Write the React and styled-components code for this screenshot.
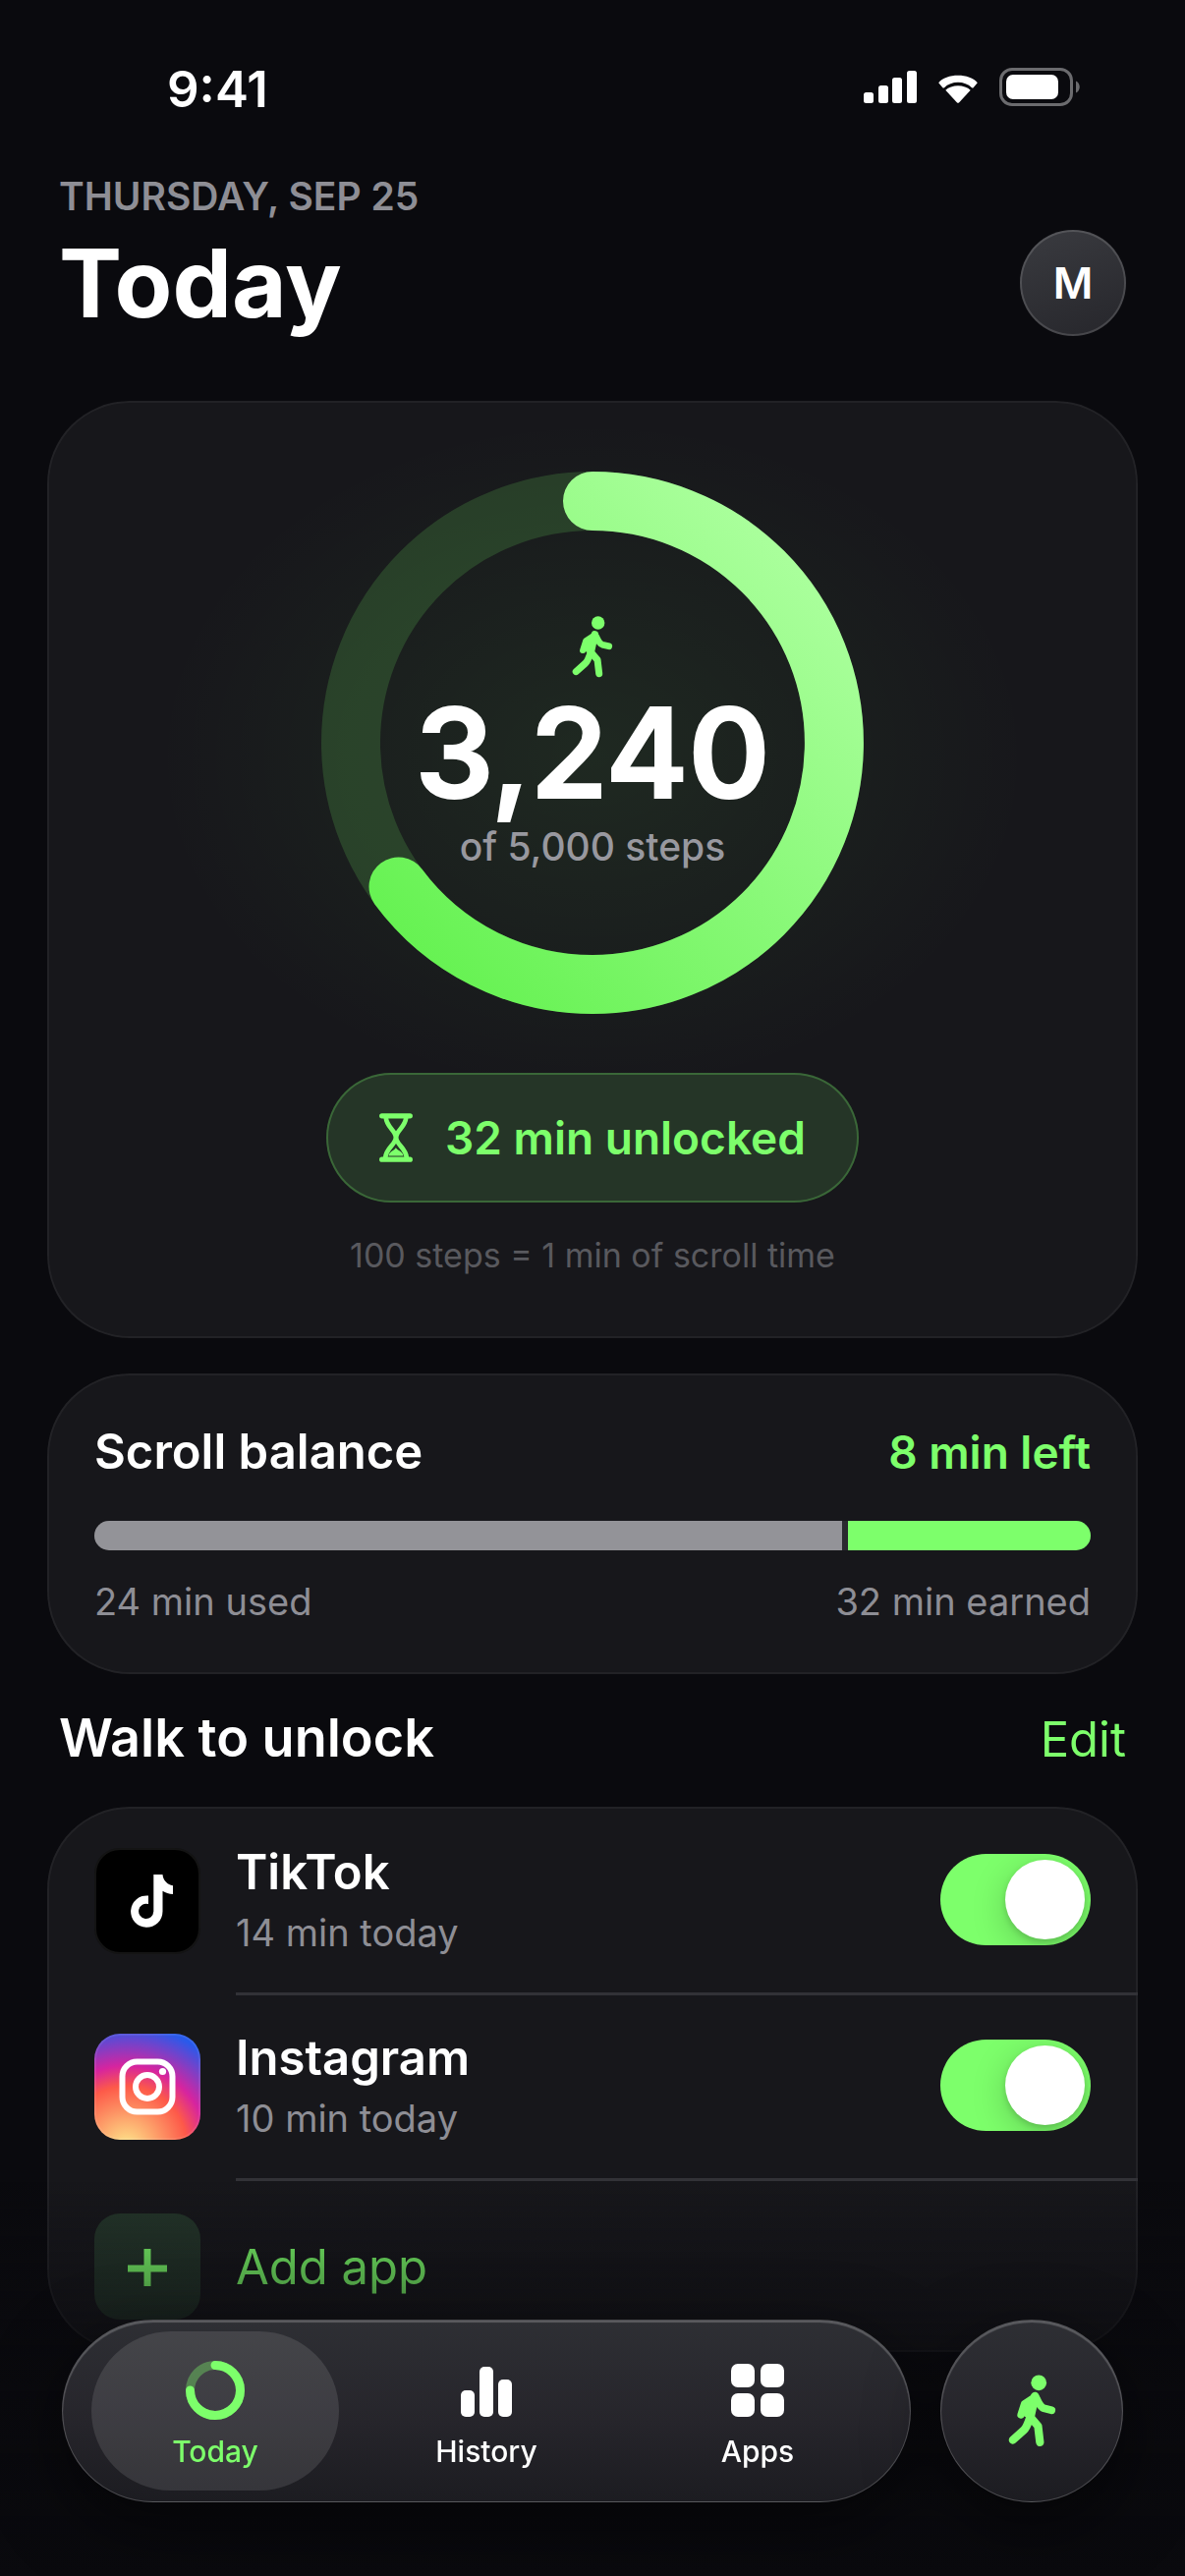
import React, { useState } from 'react';
import styled, { createGlobalStyle } from 'styled-components';

const accent = '#7dff6b';
const page = '#0a0a0e';

const GlobalStyle = createGlobalStyle`
    * {
        box-sizing: border-box;
    }
    body {
        margin: 0;
        background: ${page};
        color: #fff;
        font-family: Inter, "Liberation Sans", sans-serif;
    }
    h1, h2, h3, p, ul {
        margin: 0;
        padding: 0;
    }
    button {
        border: 0;
        padding: 0;
        background: none;
        color: inherit;
        font: inherit;
        cursor: pointer;
    }
    svg {
        display: block;
    }
`;

const Screen = styled.div`
    min-height: 100vh;
    padding-bottom: 226px;
    background: ${page};
`;

const StatusBar = styled.div`
    height: 180px;
    padding: 0 106px 0 170px;
    display: flex;
    align-items: center;
    justify-content: space-between;
`;

const Time = styled.span`
    font-size: 51px;
    font-weight: 600;
`;

const Header = styled.header`
    padding: 0 60px 66px;
    display: flex;
    align-items: flex-end;
    justify-content: space-between;
`;

const HeaderText = styled.div`
    display: flex;
    flex-direction: column;
    gap: 14px;
`;

const DateLabel = styled.p`
    font-size: 39px;
    font-weight: 600;
    line-height: 40px;
    color: #8e8e95;
    text-transform: uppercase;
`;

const Title = styled.h1`
    font-size: 96px;
    font-weight: 700;
    line-height: 108px;
`;

const Avatar = styled.button`
    width: 108px;
    height: 108px;
    border-radius: 50%;
    background: linear-gradient(160deg, #3a3b40, #26262b);
    box-shadow: inset 0 0 0 2px rgba(255, 255, 255, 0.14);
    font-size: 44px;
    font-weight: 600;
`;

const Card = styled.section`
    margin: 0 48px;
    border-radius: 84px;
    background: #17171b;
    box-shadow: inset 0 0 0 2px rgba(255, 255, 255, 0.05);
    overflow: hidden;
`;

const RingCard = styled(Card)`
    padding: 72px 48px 60px;
    display: flex;
    flex-direction: column;
    align-items: center;
    background:
        radial-gradient(ellipse 40% 36% at 50% 38%, rgba(125, 255, 107, 0.08), rgba(125, 255, 107, 0)),
        #17171b;
`;

const RingBox = styled.div`
    display: grid;
    place-items: center;

    > * {
        grid-area: 1 / 1;
    }
`;

const RingContent = styled.div`
    display: flex;
    flex-direction: column;
    align-items: center;
`;

const Steps = styled.strong`
    margin-top: 16px;
    font-size: 126px;
    font-weight: 600;
    line-height: 120px;
    -webkit-text-stroke: 2px #fff;
    stroke-linejoin: round;
`;

const StepsGoal = styled.span`
    margin-top: 12px;
    font-size: 39px;
    font-weight: 500;
    line-height: 48px;
    color: #98989f;
`;

const UnlockedPill = styled.div`
    height: 132px;
    margin-top: 60px;
    padding: 0 54px;
    display: flex;
    align-items: center;
    gap: 33px;
    border-radius: 66px;
    background: #253527;
    box-shadow: inset 0 0 0 2px rgba(125, 255, 107, 0.25);
    color: ${accent};
    font-size: 46px;
    font-weight: 600;
`;

const Hint = styled.p`
    margin-top: 30px;
    font-size: 34px;
    line-height: 48px;
    color: #59595e;
`;

const BalanceCard = styled(Card)`
    margin-top: 36px;
    padding: 50px 48px;
`;

const Split = styled.div`
    display: flex;
    align-items: baseline;
    justify-content: space-between;
`;

const RowTitle = styled.h3`
    font-size: 49px;
    font-weight: 600;
    line-height: 60px;
`;

const Left = styled.strong`
    font-size: 46px;
    font-weight: 600;
    line-height: 60px;
    color: ${accent};
`;

const Muted = styled.span`
    font-size: 38px;
    line-height: 48px;
    color: #8e8e95;
`;

const Track = styled.div`
    height: 30px;
    margin: 40px 0 28px;
    display: flex;
    gap: 6px;
    border-radius: 15px;
    background: #2a2a2f;
    overflow: hidden;
`;

const Used = styled.div`
    background: #939398;
`;

const Remaining = styled.div`
    flex: 1;
    background: ${accent};
`;

const SectionHead = styled(Split)`
    padding: 29px 60px 34px;
`;

const SectionTitle = styled.h2`
    font-size: 54px;
    font-weight: 600;
    line-height: 72px;
`;

const EditLink = styled.a`
    color: ${accent};
    font-size: 49px;
    text-decoration: none;
`;

const AppList = styled.ul`
    padding-top: 3px;
    list-style: none;
`;

const AppRow = styled.li`
    padding-left: 48px;
    display: flex;
    align-items: center;
    gap: 36px;
`;

const RowBody = styled.div`
    flex: 1;
    min-height: ${(p) => (p.$last ? 174 : 189)}px;
    padding: 0 48px ${(p) => (p.$last ? 0 : 4)}px 0;
    display: flex;
    align-items: center;
    justify-content: space-between;
    border-bottom: ${(p) => (p.$last ? 0 : 3)}px solid #323237;
`;

const RowLabel = styled.label`
    display: flex;
    flex-direction: column;
    gap: 7px;
`;

const AppIcon = styled.span`
    width: 108px;
    height: 108px;
    margin-bottom: ${(p) => (p.$flat ? 0 : 3)}px;
    display: grid;
    place-items: center;
    border-radius: 26px;
    background: ${(p) => p.$fill};
    box-shadow: ${(p) => (p.$flat ? 'none' : 'inset 0 0 0 2px rgba(255, 255, 255, 0.08)')};
`;

const AddButton = styled.button`
    color: ${accent};
    font-size: 49px;
`;

const Switch = styled.input`
    appearance: none;
    width: 153px;
    height: 93px;
    margin: 0;
    padding: 6px;
    display: flex;
    justify-content: ${(p) => (p.checked ? 'flex-end' : 'flex-start')};
    border-radius: 47px;
    background: ${(p) => (p.checked ? accent : '#39393e')};
    overflow: hidden;
    cursor: pointer;

    &::before {
        content: "";
        width: 81px;
        height: 81px;
        border-radius: 50%;
        background: #fff;
        box-shadow: 0 3px 6px rgba(0, 0, 0, 0.15), 0 9px 36px rgba(0, 0, 0, 0.2);
    }
`;

const BottomFade = styled.div`
    position: fixed;
    left: 0;
    right: 0;
    bottom: 0;
    height: 402px;
    background: linear-gradient(rgba(10, 10, 14, 0), rgba(10, 10, 14, 0.65) 45%, ${page});
    pointer-events: none;
`;

const BottomBar = styled.div`
    position: fixed;
    left: 63px;
    right: 63px;
    bottom: 75px;
    display: flex;
    gap: 30px;
`;

const glass = `
    background: linear-gradient(#2e2f34, #26252b 55%, #1c1c21);
    border: 1px solid rgba(255, 255, 255, 0.2);
    box-shadow: inset 0 2px 1px rgba(255, 255, 255, 0.22), 0 24px 72px rgba(0, 0, 0, 0.5);
`;

const TabBar = styled.nav`
    flex: 1;
    height: 186px;
    padding: 11px 29px;
    display: grid;
    grid-template-columns: repeat(3, 1fr);
    gap: 24px;
    border-radius: 93px;
    ${glass}
`;

const Tab = styled.button`
    padding-top: 8px;
    display: flex;
    flex-direction: column;
    align-items: center;
    justify-content: center;
    gap: 14px;
    border-radius: 81px;
    background: ${(p) => (p.$active ? 'rgba(255, 255, 255, 0.11)' : 'none')};
    color: ${(p) => (p.$active ? accent : '#fff')};
    font-size: 30px;
    font-weight: 500;
    line-height: 36px;
`;

const WalkButton = styled.button`
    width: 186px;
    height: 186px;
    display: grid;
    place-items: center;
    border-radius: 50%;
    ${glass}
`;

function StatusIcons() {
    return (
        <svg width="222" height="42" viewBox="0 0 222 42" fill="#fff" aria-hidden="true">
            <rect x="1" y="25" width="10" height="11" rx="2.5" />
            <rect x="16" y="18" width="10" height="18" rx="2.5" />
            <rect x="30" y="10" width="10" height="26" rx="2.5" />
            <rect x="45" y="3" width="10" height="33" rx="2.5" />
            <path d="M77.2 15.3C84.6 5.1 109.4 5.1 116.8 15.3L112.6 20.2Q111.8 20.9 111 20.2C104 12.8 90 12.8 83 20.2Q82.2 20.9 81.4 20.2Z" />
            <path d="M84.3 22.8C90.5 16.6 103.5 16.6 109.7 22.8L98.2 35.3Q97 36.3 95.8 35.3Z" />
            <rect x="140.5" y="1.5" width="72" height="36" rx="11.5" fill="none" stroke="#6b6b6e" strokeWidth="3" />
            <rect x="146" y="7" width="53" height="25" rx="7" />
            <path d="M217 13.5C222 15.5 222 23.5 217 25.5Z" fill="#6b6b6e" />
        </svg>
    );
}

function Walker({ width, height }) {
    return (
        <svg
            width={width}
            height={height}
            viewBox="130 78 124 188"
            fill="none"
            stroke={accent}
            strokeLinecap="round"
            strokeLinejoin="round"
            aria-hidden="true"
        >
            <circle cx="209" cy="99" r="20" fill={accent} stroke="none" />
            <path d="M199 134L187 188" strokeWidth="22" />
            <path d="M197 137L172 154L163 182" strokeWidth="19" />
            <path d="M182 152L176 182" strokeWidth="12" />
            <path d="M203 140Q213 162 222 165L242 170" strokeWidth="20" />
            <path d="M187 188L207 211L212 253" strokeWidth="21" />
            <path d="M186 190Q177 216 170 222L142 247" strokeWidth="21" />
        </svg>
    );
}

function Hourglass() {
    return (
        <svg width="34" height="50" viewBox="50 44 101 149" fill="none" stroke={accent} strokeLinecap="round" aria-hidden="true">
            <path d="M58 52.5H143M58 184.5H143" strokeWidth="16" />
            <path
                d="M70 58C73 88 100 96 100 118C100 140 71 148 68 180M131 58C128 88 101 96 101 118C101 140 130 148 133 180"
                strokeWidth="14"
            />
            <path d="M100 149C106 158 121 160 123 174H78C80 160 95 158 100 149Z" fill={accent} stroke="none" />
        </svg>
    );
}

function StepsRing({ progress }) {
    const length = 2 * Math.PI * 82;

    return (
        <svg width="552" height="552" viewBox="0 0 184 184" fill="none" aria-hidden="true">
            <defs>
                <linearGradient id="ring" x1="0" y1="1" x2="1" y2="0">
                    <stop offset="0.1" stopColor="#66f252" />
                    <stop offset="0.9" stopColor="#aaff9c" />
                </linearGradient>
            </defs>
            <circle cx="92" cy="92" r="82" stroke={accent} strokeOpacity="0.16" strokeWidth="20" />
            <path
                d="M92 10A82 82 0 0 1 92 174A82 82 0 0 1 92 10"
                stroke="url(#ring)"
                strokeWidth="20"
                strokeLinecap="round"
                strokeDasharray={`${length * progress} ${length}`}
            />
        </svg>
    );
}

function TikTokIcon() {
    return (
        <svg width="54" height="54" viewBox="-10 0 54 54" fill="#fff" aria-hidden="true">
            <path d="M23.3 0H32.5C33 6 37.5 10.5 43 11.2V20C39 20 35.5 18.8 32.5 16.8V37.6A16.2 16.2 0 1 1 18 21.5V30.1A7.6 7.6 0 1 0 23.3 37.6Z" />
        </svg>
    );
}

function InstagramIcon() {
    return (
        <svg width="58" height="58" viewBox="0 0 58 58" fill="none" stroke="#fff" strokeWidth="6" aria-hidden="true">
            <rect x="3.5" y="3.5" width="51" height="51" rx="15" />
            <circle cx="29" cy="29" r="12" />
            <circle cx="44.5" cy="13.5" r="3.6" fill="#fff" stroke="none" />
        </svg>
    );
}

function PlusIcon() {
    return (
        <svg width="40" height="40" viewBox="0 0 40 40" stroke={accent} strokeWidth="7" aria-hidden="true">
            <path d="M0 22H40M20 2V40" />
        </svg>
    );
}

function TodayIcon() {
    return (
        <svg width="60" height="60" viewBox="0 0 60 60" fill="none" stroke="currentColor" strokeWidth="9" aria-hidden="true">
            <circle cx="30" cy="30" r="25.5" strokeOpacity="0.35" />
            <path d="M30 4.5A25.5 25.5 0 1 1 4.5 30" strokeLinecap="round" />
        </svg>
    );
}

function HistoryIcon() {
    return (
        <svg width="60" height="60" viewBox="0 0 60 60" fill="currentColor" aria-hidden="true">
            <rect x="4" y="30" width="14" height="27" rx="5" />
            <rect x="23" y="6" width="14" height="51" rx="5" />
            <rect x="42" y="19" width="14" height="38" rx="5" />
        </svg>
    );
}

function AppsIcon() {
    return (
        <svg width="60" height="60" viewBox="0 0 60 60" fill="currentColor" aria-hidden="true">
            <rect x="3" y="3" width="24" height="24" rx="7" />
            <rect x="33" y="3" width="24" height="24" rx="7" />
            <rect x="3" y="33" width="24" height="24" rx="7" />
            <rect x="33" y="33" width="24" height="24" rx="7" />
        </svg>
    );
}

const apps = [
    { id: 'tiktok', name: 'TikTok', minutes: 14, fill: '#000', Icon: TikTokIcon },
    {
        id: 'instagram',
        name: 'Instagram',
        minutes: 10,
        fill: 'radial-gradient(circle at 30% 107%, #fdf497 0%, #fdda85 5%, #fd5949 45%, #d6249f 60%, #285aeb 90%)',
        Icon: InstagramIcon,
    },
];

const tabs = [
    { name: 'Today', Icon: TodayIcon },
    { name: 'History', Icon: HistoryIcon },
    { name: 'Apps', Icon: AppsIcon },
];

export default function App() {
    const [blocked, setBlocked] = useState({ tiktok: true, instagram: true });
    const [tab, setTab] = useState('Today');

    const steps = 3240;
    const goal = 5000;
    const used = 24;
    const earned = 32;

    const toggle = (id) => setBlocked({ ...blocked, [id]: !blocked[id] });

    return (
        <Screen>
            <GlobalStyle />
            <StatusBar>
                <Time>9:41</Time>
                <StatusIcons />
            </StatusBar>
            <Header>
                <HeaderText>
                    <DateLabel>Thursday, Sep 25</DateLabel>
                    <Title>Today</Title>
                </HeaderText>
                <Avatar>M</Avatar>
            </Header>

            <RingCard>
                <RingBox>
                    <StepsRing progress={steps / goal} />
                    <RingContent>
                        <Walker width="42" height="63" />
                        <Steps>{steps.toLocaleString('en-US')}</Steps>
                        <StepsGoal>of {goal.toLocaleString('en-US')} steps</StepsGoal>
                    </RingContent>
                </RingBox>
                <UnlockedPill>
                    <Hourglass />
                    <span>{earned} min unlocked</span>
                </UnlockedPill>
                <Hint>100 steps = 1 min of scroll time</Hint>
            </RingCard>

            <BalanceCard>
                <Split>
                    <RowTitle>Scroll balance</RowTitle>
                    <Left>{earned - used} min left</Left>
                </Split>
                <Track>
                    <Used style={{ width: `${(used / earned) * 100}%` }} />
                    <Remaining />
                </Track>
                <Split>
                    <Muted>{used} min used</Muted>
                    <Muted>{earned} min earned</Muted>
                </Split>
            </BalanceCard>

            <SectionHead>
                <SectionTitle>Walk to unlock</SectionTitle>
                <EditLink href="#edit">Edit</EditLink>
            </SectionHead>

            <Card>
                <AppList>
                    {apps.map(({ id, name, minutes, fill, Icon }) => (
                        <AppRow key={id}>
                            <AppIcon $fill={fill}>
                                <Icon />
                            </AppIcon>
                            <RowBody>
                                <RowLabel htmlFor={id}>
                                    <RowTitle as="span">{name}</RowTitle>
                                    <Muted>{minutes} min today</Muted>
                                </RowLabel>
                                <Switch
                                    id={id}
                                    type="checkbox"
                                    role="switch"
                                    checked={blocked[id]}
                                    onChange={() => toggle(id)}
                                />
                            </RowBody>
                        </AppRow>
                    ))}
                    <AppRow>
                        <AppIcon $fill="#24352a" $flat>
                            <PlusIcon />
                        </AppIcon>
                        <RowBody $last>
                            <AddButton>Add app</AddButton>
                        </RowBody>
                    </AppRow>
                </AppList>
            </Card>

            <BottomFade />
            <BottomBar>
                <TabBar>
                    {tabs.map(({ name, Icon }) => (
                        <Tab key={name} $active={tab === name} onClick={() => setTab(name)}>
                            <Icon />
                            <span>{name}</span>
                        </Tab>
                    ))}
                </TabBar>
                <WalkButton aria-label="Start walking">
                    <Walker width="49" height="74" />
                </WalkButton>
            </BottomBar>
        </Screen>
    );
}
